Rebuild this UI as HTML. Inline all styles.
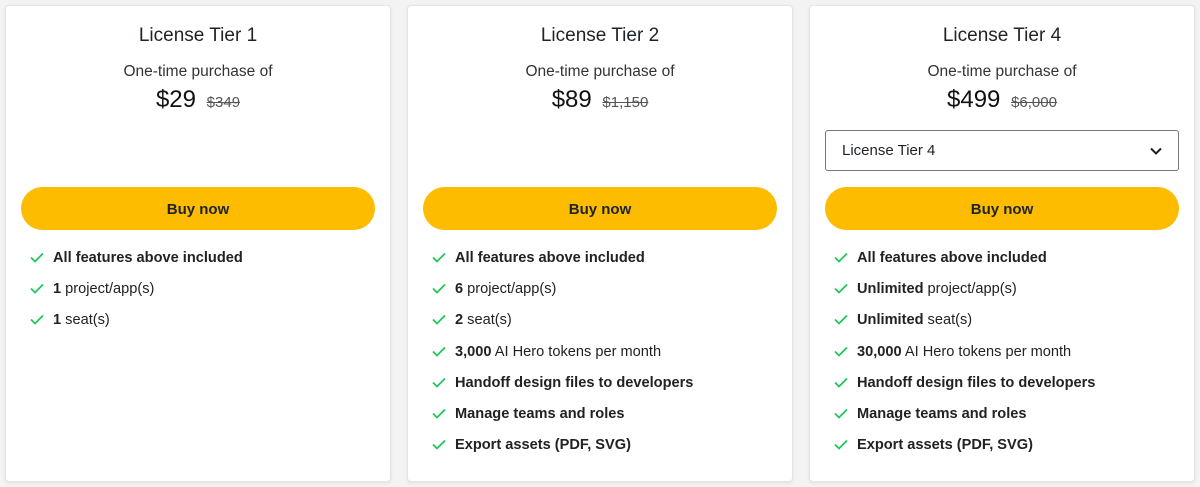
<!DOCTYPE html><html><head><style>
body{margin:0;width:1200px;height:487px;background:#f3f3f3;font-family:"Liberation Sans",sans-serif;color:#1d2327;overflow:hidden;position:relative}
.card{position:absolute;top:5px;width:384px;height:475px;background:#fff;border:1px solid #e4e4e4;border-radius:4px;box-shadow:0 1px 3px rgba(0,0,0,.08)}
.t{position:absolute;top:18px;left:0;right:0;text-align:center;font-size:19px;line-height:24px}
.o{position:absolute;top:57px;left:0;right:0;text-align:center;font-size:15.5px;color:#333}
.p{position:absolute;top:80px;left:0;right:0;text-align:center;font-size:24px;color:#111}
.p s{font-size:15px;color:#555;margin-left:4px}
.b{position:absolute;top:181px;left:15px;width:354px;height:43px;border-radius:22px;background:#fdbc00;text-align:center;line-height:46px;font-weight:bold;font-size:15px}
.sel{position:absolute;top:124px;left:15px;border:1px solid #777;border-radius:3px;font-size:15px;line-height:40px;padding-left:16px;box-sizing:border-box;width:354px;height:41px}
.sel svg{position:absolute;right:16px;top:16px}
ul{position:absolute;top:241px;left:22px;margin:0;padding:0;list-style:none;font-size:14.6px}
li{height:31.2px;line-height:22px;position:relative;padding-left:25px;color:#222}
li svg{position:absolute;left:2px;top:5px}
</style></head><body>
<svg width="0" height="0" style="position:absolute"><defs><symbol id="c" viewBox="0 0 14 11"><path d="M1 5.5l4 4L13 1.5" fill="none" stroke="#22c55e" stroke-width="1.8"/></symbol></defs></svg>
<div class="card" style="left:5px"><div class="t">License Tier 1</div><div class="o">One-time purchase of</div><div class="p">$29 <s>$349</s></div><div class="b">Buy now</div>
<ul><li><svg width="14" height="11"><use href="#c"/></svg><b>All features above included</b></li><li><svg width="14" height="11"><use href="#c"/></svg><b>1</b> project/app(s)</li><li><svg width="14" height="11"><use href="#c"/></svg><b>1</b> seat(s)</li></ul></div>
<div class="card" style="left:407px"><div class="t">License Tier 2</div><div class="o">One-time purchase of</div><div class="p">$89 <s>$1,150</s></div><div class="b">Buy now</div>
<ul><li><svg width="14" height="11"><use href="#c"/></svg><b>All features above included</b></li><li><svg width="14" height="11"><use href="#c"/></svg><b>6</b> project/app(s)</li><li><svg width="14" height="11"><use href="#c"/></svg><b>2</b> seat(s)</li><li><svg width="14" height="11"><use href="#c"/></svg><b>3,000</b> AI Hero tokens per month</li><li><svg width="14" height="11"><use href="#c"/></svg><b>Handoff design files to developers</b></li><li><svg width="14" height="11"><use href="#c"/></svg><b>Manage teams and roles</b></li><li><svg width="14" height="11"><use href="#c"/></svg><b>Export assets (PDF, SVG)</b></li></ul></div>
<div class="card" style="left:809px"><div class="t">License Tier 4</div><div class="o">One-time purchase of</div><div class="p">$499 <s>$6,000</s></div>
<div class="sel">License Tier 4<svg width="12" height="8" viewBox="0 0 12 8"><path d="M1 1.5l5 5 5-5" fill="none" stroke="#222" stroke-width="2"/></svg></div>
<div class="b">Buy now</div>
<ul><li><svg width="14" height="11"><use href="#c"/></svg><b>All features above included</b></li><li><svg width="14" height="11"><use href="#c"/></svg><b>Unlimited</b> project/app(s)</li><li><svg width="14" height="11"><use href="#c"/></svg><b>Unlimited</b> seat(s)</li><li><svg width="14" height="11"><use href="#c"/></svg><b>30,000</b> AI Hero tokens per month</li><li><svg width="14" height="11"><use href="#c"/></svg><b>Handoff design files to developers</b></li><li><svg width="14" height="11"><use href="#c"/></svg><b>Manage teams and roles</b></li><li><svg width="14" height="11"><use href="#c"/></svg><b>Export assets (PDF, SVG)</b></li></ul></div>
</body></html>
